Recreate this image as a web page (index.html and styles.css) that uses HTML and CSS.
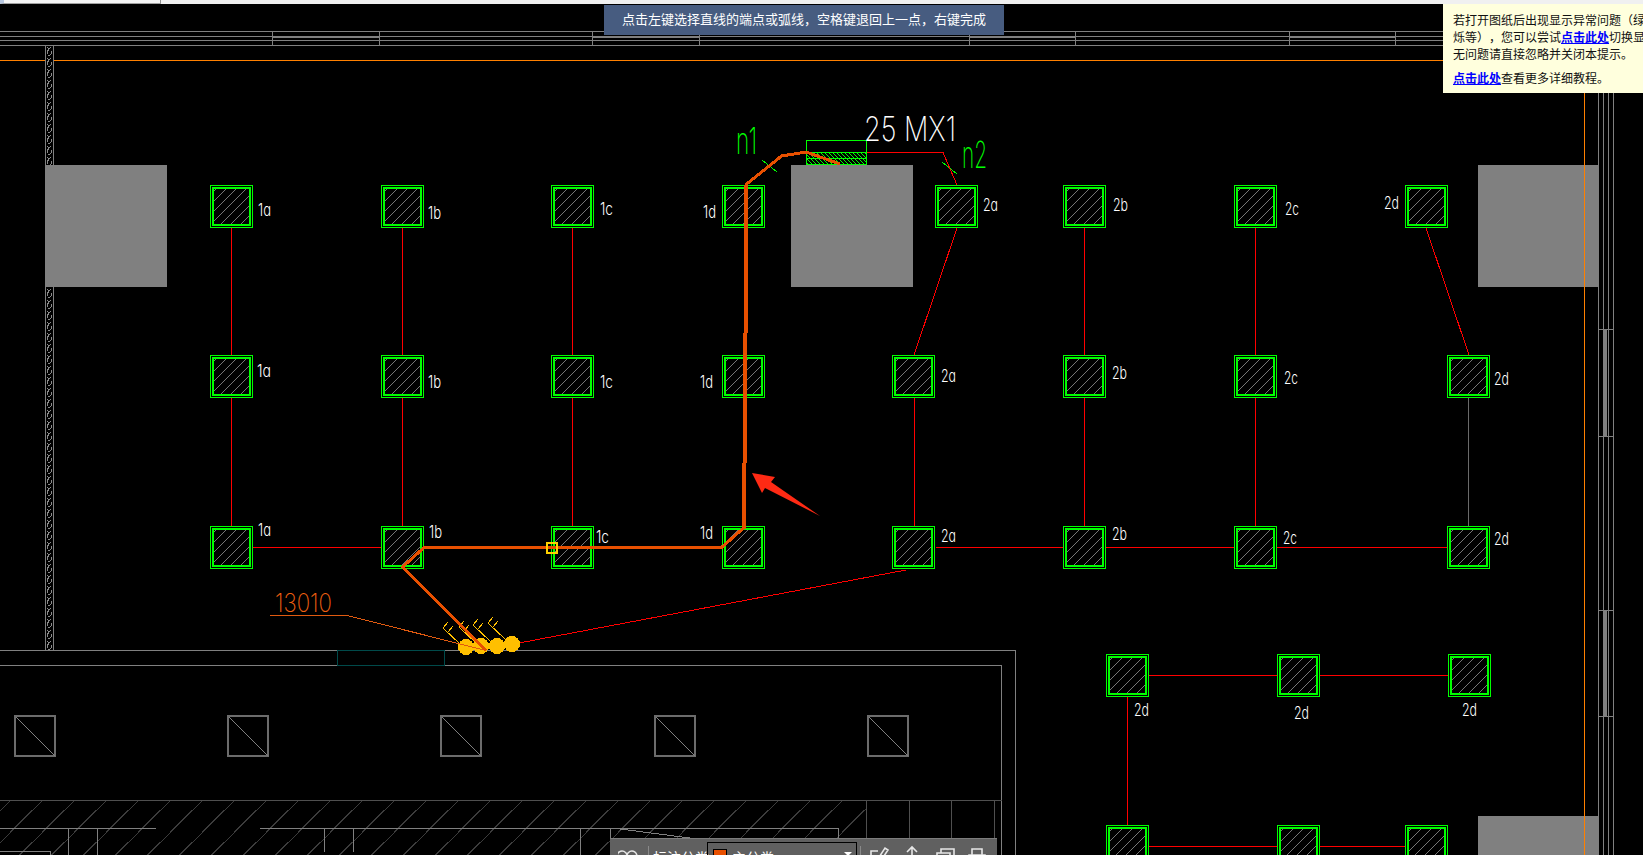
FILE: index.html
```html
<!DOCTYPE html>
<html lang="zh">
<head>
<meta charset="utf-8">
<title>CAD</title>
<link rel="stylesheet" href="styles.css">
</head>
<body>
<main class="stage">
  <svg class="drawing" width="1643" height="855" viewBox="0 0 1643 855">
    <defs>
      <pattern id="colHatch" patternUnits="userSpaceOnUse" width="10" height="10">
        <path class="hatch-grey" d="M-1 11L11 -1M-1 1L1 -1M9 11L11 9"/>
      </pattern>
      <pattern id="wallHatch" patternUnits="userSpaceOnUse" x="46" y="46" width="7" height="11">
        <rect class="black" width="7" height="11"/>
        <path class="wall-mark" d="M1 1L3 3L5 1M3 3L1 6L2 8M5 5L6 7L4 9L2 9"/>
      </pattern>
      <pattern id="beamHatch" patternUnits="userSpaceOnUse" width="4" height="4">
        <path class="hatch-green" d="M0 0L4 4"/>
      </pattern>
      <pattern id="slabHatch" patternUnits="userSpaceOnUse" width="32" height="32">
        <path class="hatch-slab" d="M0 10.7L10.7 0M10.7 32L32 10.7"/>
      </pattern>
      <g id="col">
        <rect class="col-outer" x="0.5" y="0.5" width="42" height="42"/>
        <rect class="col-inner" x="3" y="3" width="37" height="37" fill="url(#colHatch)"/>
      </g>
      <g id="win">
        <rect class="win-box" x="1" y="1" width="40" height="40"/>
        <path class="win-diag" d="M2 2L41 41"/>
      </g>
      <g id="flag">
        <path class="flag" d="M13 13L-5 -4L0 -10M0 0L5 -6"/>
      </g>
    </defs>

    <!-- outer walls at the top -->
    <path class="wall" d="M0 31.5H1643M0 36.5H1643M0 40.5H1643M0 45.5H1643"/>
    <path class="wall" d="M272.5 31V46M379.5 31V46M592.5 31V46M699.5 31V46M969.5 31V46M1075.5 31V46M1289.5 31V46M1395.5 31V46"/>
    <path class="wall-double" d="M272 37H380M592 37H700M969 37H1076M1289 37H1396"/>
    <path class="axis" d="M0 60.5H1643"/>

    <rect class="wall-band" x="45.5" y="45.5" width="8" height="605" fill="url(#wallHatch)"/>

    <!-- right walls -->
    <path class="wall" d="M1598.5 31V855M1603.5 31V855M1608.5 31V855M1613.5 31V855"/>
    <path class="wall" d="M1598 329.5H1614M1598 436.5H1614M1598 610.5H1614M1598 716.5H1614"/>
    <path class="wall-thick" d="M1605.5 329V437M1605.5 610V717"/>

    <!-- concrete blocks -->
    <rect class="block" x="45" y="165" width="122" height="122"/>
    <rect class="block" x="791" y="165" width="122" height="122"/>
    <rect class="block" x="1478" y="165" width="120.5" height="122"/>
    <rect class="block" x="1478" y="816" width="120.5" height="39"/>
    <path class="axis" d="M1584.5 60V855"/>

    <!-- lower building -->
    <path class="wall" d="M0 650.5H1015.5V855M0 665.5H1001.5V855"/>
    <path class="teal" d="M337.5 650.5H444.5V665.5H337.5Z"/>
    <use href="#win" x="14" y="715"/>
    <use href="#win" x="227" y="715"/>
    <use href="#win" x="440" y="715"/>
    <use href="#win" x="654" y="715"/>
    <use href="#win" x="867" y="715"/>
    <rect class="slab" x="0" y="800" width="866" height="55" fill="url(#slabHatch)"/>
    <path class="slab-line" d="M0 800.5H1001.5M866.5 800V855M909.5 800V855M951.5 800V855M994.5 800V855"/>
    <path class="wall" d="M0 828.5H156M260 828.5H838.5V840M68.5 828V855M97.5 828V855M324.5 828V852M353.5 828V852M580.5 828V855M610.5 828V840M0 851.5H50.5V855"/>
    <path class="wall-slope" d="M620 829L690 838"/>

    <!-- beam n1/n2 -->
    <rect class="beam-hatch" x="806.5" y="152.5" width="60" height="12" fill="url(#beamHatch)"/>
    <path class="green" d="M806.5 164.5V140.5H866.5V164.5H806.5M806.5 152.5H866.5M806.5 158.5H866.5"/>
    <path class="green" d="M762 160L777 172M942 162L957 174"/>
    <path class="red" d="M866.5 152.5H943L957 185"/>

    <!-- thin red links -->
    <path class="red" d="M231.5 228V355M402.5 228V355M572.5 228V355M1084.5 228V355M1255.5 228V355M957 228L914 355M1426 228L1469 355"/>
    <path class="red" d="M231.5 398V526M402.5 398V526M572.5 398V526M914.5 398V526M1084.5 398V526M1255.5 398V526"/>
    <path class="wall-fine" d="M1468.5 398V526"/>
    <path class="red" d="M252 547.5H381M936 547.5H1448"/>
    <path class="red" d="M519 643L906 570"/>
    <path class="red" d="M1148 675.5H1448M1127.5 697V825M1148 846.5H1405"/>

    <!-- columns -->
    <use href="#col" x="210" y="185"/>
    <use href="#col" x="381" y="185"/>
    <use href="#col" x="551" y="185"/>
    <use href="#col" x="722" y="185"/>
    <use href="#col" x="935" y="185"/>
    <use href="#col" x="1063" y="185"/>
    <use href="#col" x="1234" y="185"/>
    <use href="#col" x="1405" y="185"/>

    <use href="#col" x="210" y="355"/>
    <use href="#col" x="381" y="355"/>
    <use href="#col" x="551" y="355"/>
    <use href="#col" x="722" y="355"/>
    <use href="#col" x="892" y="355"/>
    <use href="#col" x="1063" y="355"/>
    <use href="#col" x="1234" y="355"/>
    <use href="#col" x="1447" y="355"/>

    <use href="#col" x="210" y="526"/>
    <use href="#col" x="381" y="526"/>
    <use href="#col" x="551" y="526"/>
    <use href="#col" x="722" y="526"/>
    <use href="#col" x="892" y="526"/>
    <use href="#col" x="1063" y="526"/>
    <use href="#col" x="1234" y="526"/>
    <use href="#col" x="1447" y="526"/>

    <use href="#col" x="1106" y="654"/>
    <use href="#col" x="1277" y="654"/>
    <use href="#col" x="1448" y="654"/>
    <use href="#col" x="1106" y="825"/>
    <use href="#col" x="1277" y="825"/>
    <use href="#col" x="1405" y="825"/>

    <!-- column labels -->
    <g class="cad-label">
      <text x="258" y="216" textLength="13" lengthAdjust="spacingAndGlyphs">1a</text>
      <text x="428" y="219" textLength="13" lengthAdjust="spacingAndGlyphs">1b</text>
      <text x="600" y="215" textLength="13" lengthAdjust="spacingAndGlyphs">1c</text>
      <text x="703" y="218" textLength="13" lengthAdjust="spacingAndGlyphs">1d</text>
      <text x="983" y="211" textLength="15" lengthAdjust="spacingAndGlyphs">2a</text>
      <text x="1113" y="211" textLength="15" lengthAdjust="spacingAndGlyphs">2b</text>
      <text x="1285" y="215" textLength="14" lengthAdjust="spacingAndGlyphs">2c</text>
      <text x="1384" y="209" textLength="15" lengthAdjust="spacingAndGlyphs">2d</text>

      <text x="257" y="377" textLength="14" lengthAdjust="spacingAndGlyphs">1a</text>
      <text x="428" y="388" textLength="13" lengthAdjust="spacingAndGlyphs">1b</text>
      <text x="600" y="388" textLength="13" lengthAdjust="spacingAndGlyphs">1c</text>
      <text x="700" y="388" textLength="13" lengthAdjust="spacingAndGlyphs">1d</text>
      <text x="941" y="382" textLength="15" lengthAdjust="spacingAndGlyphs">2a</text>
      <text x="1112" y="379" textLength="15" lengthAdjust="spacingAndGlyphs">2b</text>
      <text x="1284" y="384" textLength="14" lengthAdjust="spacingAndGlyphs">2c</text>
      <text x="1494" y="385" textLength="15" lengthAdjust="spacingAndGlyphs">2d</text>

      <text x="258" y="536" textLength="13" lengthAdjust="spacingAndGlyphs">1a</text>
      <text x="429" y="538" textLength="13" lengthAdjust="spacingAndGlyphs">1b</text>
      <text x="596" y="543" textLength="13" lengthAdjust="spacingAndGlyphs">1c</text>
      <text x="700" y="539" textLength="13" lengthAdjust="spacingAndGlyphs">1d</text>
      <text x="941" y="542" textLength="15" lengthAdjust="spacingAndGlyphs">2a</text>
      <text x="1112" y="540" textLength="15" lengthAdjust="spacingAndGlyphs">2b</text>
      <text x="1283" y="544" textLength="14" lengthAdjust="spacingAndGlyphs">2c</text>
      <text x="1494" y="545" textLength="15" lengthAdjust="spacingAndGlyphs">2d</text>

      <text x="1134" y="716" textLength="15" lengthAdjust="spacingAndGlyphs">2d</text>
      <text x="1294" y="719" textLength="15" lengthAdjust="spacingAndGlyphs">2d</text>
      <text x="1462" y="716" textLength="15" lengthAdjust="spacingAndGlyphs">2d</text>
    </g>
    <text class="cad-title" x="864" y="141" textLength="92" lengthAdjust="spacingAndGlyphs">25 MX1</text>
    <text class="cad-n" x="736" y="154" textLength="21" lengthAdjust="spacingAndGlyphs">n1</text>
    <text class="cad-n" x="962" y="168" textLength="25" lengthAdjust="spacingAndGlyphs">n2</text>
    <text class="cad-code" x="275" y="612" textLength="57" lengthAdjust="spacingAndGlyphs">13010</text>

    <!-- elbow markers -->
    <g class="elbows">
      <circle cx="466" cy="647" r="8"/>
      <circle cx="481" cy="646" r="8"/>
      <circle cx="497" cy="646" r="8"/>
      <circle cx="512" cy="644" r="8"/>
    </g>
    <use href="#flag" x="448" y="632"/>
    <use href="#flag" x="464" y="631"/>
    <use href="#flag" x="478" y="629"/>
    <use href="#flag" x="493" y="627"/>

    <path class="leader" d="M270 615H345L486 650.5"/>

    <!-- selected route -->
    <path class="route" d="M840 164L806 152L781.5 156L745.5 185M743.5 528L721.5 547.5H424L402.5 567L486 650.5"/>
    <path class="route-riser" d="M745.5 185V333M745 333V463M743.5 463V529"/>
    <rect class="snap" x="547" y="543" width="10" height="10"/>

    <!-- annotation arrow -->
    <path class="pointer" d="M752 473L775 477L771 482L820 516L765 488L762 493Z"/>
  </svg>

  <div class="topbar"><div class="topbar-tab"></div></div>

  <div class="prompt">点击左键选择直线的端点或弧线，空格键退回上一点，右键完成</div>

  <aside class="tip">
    <p class="tip-line">若打开图纸后出现显示异常问题（绿</p>
    <p class="tip-line">烁等），您可以尝试<a class="tip-link" href="#">点击此处</a>切换显</p>
    <p class="tip-line">无问题请直接忽略并关闭本提示。</p>
    <p class="tip-line tip-last"><a class="tip-link" href="#">点击此处</a>查看更多详细教程。</p>
  </aside>

  <div class="toolbar">
    <svg class="tool-icon" width="20" height="17" viewBox="0 0 20 17"><path d="M9 12a5 5 0 1 1 0-2a5 5 0 1 1 0 2"/></svg>
    <span class="tool-sep"></span>
    <span class="tool-label">标注分类</span>
    <div class="tool-select">
      <span class="swatch"></span>
      <span class="tool-value">主分类</span>
      <span class="caret"></span>
    </div>
    <span class="tool-sep tool-sep-wide"></span>
    <svg class="tool-icon tool-action" width="22" height="17" viewBox="0 0 22 17"><path d="M3 17V6H10M8 17L17 3L20 5L12 17"/></svg>
    <svg class="tool-icon tool-action" width="22" height="17" viewBox="0 0 22 17"><path d="M11 17V3M6 7L11 2L16 7M3 12H19"/></svg>
    <svg class="tool-icon tool-action" width="22" height="17" viewBox="0 0 22 17"><path d="M3 17V8H16V17M7 8V4H20V14"/></svg>
    <svg class="tool-icon tool-action" width="22" height="17" viewBox="0 0 22 17"><path d="M5 10V4H15V10M2 17V10H18V17"/></svg>
  </div>
</main>
</body>
</html>
```
FILE: styles.css
```css
* { box-sizing: border-box; }
html, body { margin: 0; padding: 0; background: #000; overflow: hidden; }
.stage { position: relative; width: 1643px; height: 855px; overflow: hidden; background: #000; }
.drawing { position: absolute; top: 0; left: 0; display: block; shape-rendering: crispEdges; }

.wall, .wall-fine, .axis, .red, .green, .teal, .slab-line, .wall-thick, .wall-double, .leader, .route, .route-riser, .wall-slope, .flag, .win-diag, .hatch-grey, .hatch-green, .hatch-slab, .wall-mark { fill: none; }
.wall { stroke: #808080; stroke-width: 1; }
.wall-thick { stroke: #808080; stroke-width: 3; }
.wall-double { stroke: #808080; stroke-width: 2; }
.wall-fine { stroke: #6a6a6a; stroke-width: 1; }
.wall-slope { stroke: #808080; stroke-width: 1; }
.axis { stroke: #ff8000; stroke-width: 1; }
.teal { stroke: #004a4a; stroke-width: 1; }
.block { fill: #808080; }
.black { fill: #000; }
.wall-band { stroke: #808080; stroke-width: 1; }
.wall-mark { stroke: #8a8a8a; stroke-width: 1; }
.slab { stroke: none; }
.slab-line { stroke: #4f4f4f; stroke-width: 1; }
.hatch-slab { stroke: #3c3c3c; stroke-width: 1; }
.hatch-grey { stroke: #767676; stroke-width: 1; }
.hatch-green { stroke: #00ff00; stroke-width: 1; }
.beam-hatch { stroke: none; }
.green { stroke: #00ff00; stroke-width: 1; }
.red { stroke: #ff0000; stroke-width: 1; }
.col-outer { fill: #000; stroke: #00ff00; stroke-width: 1; }
.col-inner { stroke: #00ff00; stroke-width: 2; }
.win-box { fill: none; stroke: #6c6c6c; stroke-width: 2; }
.win-diag { stroke: #808080; stroke-width: 1; }
.elbows { fill: #ffbf00; }
.flag { stroke: #ffbf00; stroke-width: 1; }
.leader { stroke: #e05a10; stroke-width: 1; }
.route { stroke: #e85000; stroke-width: 3; stroke-linejoin: miter; }
.route-riser { stroke: #e85000; stroke-width: 4; }
.snap { fill: none; stroke: #ffd000; stroke-width: 2; }
.pointer { fill: #ff2a14; shape-rendering: geometricPrecision; }

.cad-label text, .cad-title, .cad-n, .cad-code { font-family: "Inter", "Roboto", "Liberation Sans", sans-serif; font-feature-settings: "cv11"; }
.cad-label text { font-size: 17px; fill: #fff; font-weight: 300; }
.cad-title { font-size: 34px; fill: #fff; font-weight: 150; }
.cad-n { font-size: 37px; fill: #00ff00; font-weight: 150; }
.cad-code { font-size: 26px; fill: #f06010; font-weight: 150; }

.topbar { position: absolute; top: 0; left: 0; width: 100%; height: 4px; background: #f0f0f0; }
.topbar-tab { width: 161px; height: 4px; background: #f4f4f4; border-right: 1px solid #909090; border-bottom: 1px solid #a0a0a0; border-left: 4px solid #b8c8e0; }

.prompt {
  position: absolute; top: 5px; left: 604px; width: 400px; height: 30px;
  background: #475c80; color: #fff;
  font: 13px/28px "Noto Sans CJK SC", "Liberation Sans", sans-serif;
  text-align: center; white-space: nowrap;
}

.tip {
  position: absolute; top: 4px; left: 1443px; width: 200px; height: 89px;
  background: #ffffdd; color: #111; padding: 7px 0 0 10px; overflow: hidden;
  font: 12px/17px "Noto Sans CJK SC", "Liberation Sans", sans-serif;
  text-spacing-trim: space-all;
}
.tip-line { margin: 0; white-space: nowrap; }
.tip-last { margin-top: 7px; }
.tip-link { color: #0000ff; text-decoration: underline; font-weight: 700; }

.toolbar {
  position: absolute; top: 838px; left: 610px; width: 387px; height: 17px;
  background: #606060; border-top: 1px solid #7c7c7c; overflow: hidden;
  display: flex; align-items: flex-start; color: #fff; padding: 0 0 0 8px;
  font: 14px/20px "Noto Sans CJK SC", "Liberation Sans", sans-serif;
}
.tool-icon { flex: none; margin: 6px 10px 0 0; fill: none; stroke: #e6e6e6; stroke-width: 1.6; }
.tool-action { margin-right: 11px; }
.tool-sep { flex: none; width: 1px; height: 16px; margin: 7px 4px 0 0; background: #8a8a8a; }
.tool-sep-wide { margin-right: 7px; }
.tool-label { flex: none; width: 54px; padding-top: 8px; white-space: nowrap; }
.tool-select {
  flex: none; width: 150px; height: 24px; margin: 3px 3px 0 0;
  border: 1px solid #000; display: flex; align-items: flex-start; padding: 6px 6px 0 5px; position: relative;
}
.swatch { flex: none; width: 14px; height: 14px; background: #e85000; border: 1px solid #000; margin-right: 5px; }
.tool-value { line-height: 18px; margin-top: -1px; }
.caret { position: absolute; right: 4px; top: 9px; border-left: 4px solid transparent; border-right: 4px solid transparent; border-top: 4px solid #fff; }
```
